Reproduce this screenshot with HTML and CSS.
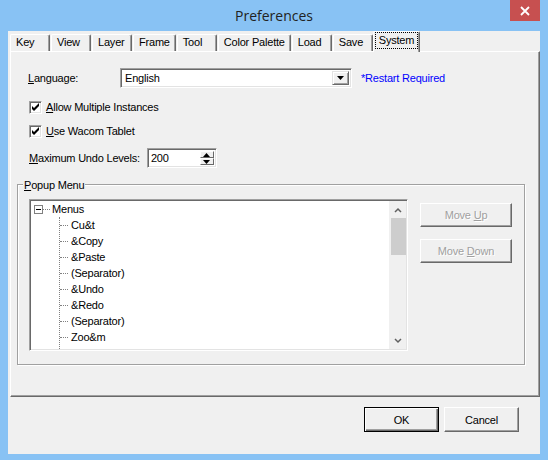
FILE: index.html
```html
<!DOCTYPE html>
<html lang="en">
<head>
    <meta charset="UTF-8">
    <meta name="viewport" content="width=device-width, initial-scale=1.0">
    <title>Preferences</title>
    <link rel="stylesheet" href="styles.css">
</head>
<body>

<div class="window">
    <div class="titlebar">
        <span class="title">Preferences</span>
        <span class="close">
            <svg width="10" height="10" viewBox="0 0 10 10"><path d="M1 1 L9 9 M9 1 L1 9" stroke="#fff" stroke-width="1.8" fill="none"/></svg>
        </span>
    </div>

    <div class="client">
        <div class="tabs">
            <div class="tab">Key</div>
            <div class="tab">View</div>
            <div class="tab">Layer</div>
            <div class="tab">Frame</div>
            <div class="tab">Tool</div>
            <div class="tab">Color Palette</div>
            <div class="tab">Load</div>
            <div class="tab">Save</div>
            <div class="tab active"><span class="focus">System</span></div>
        </div>

        <div class="page">
            <div class="lang-row">
                <span class="lang-label"><u>L</u>anguage:</span>
                <div class="combo">
                    <span class="combo-text">English</span>
                    <span class="combo-btn">
                        <svg width="7" height="4" viewBox="0 0 7 4"><path d="M0 0 H7 L3.5 4 Z" fill="#000"/></svg>
                    </span>
                </div>
                <span class="restart">*Restart Required</span>
            </div>

            <div class="check-row">
                <span class="check">
                    <svg width="13" height="13" viewBox="0 0 13 13"><path d="M3 5 L5 7 L10 2 L10 5 L5 10 L3 8 Z" fill="#000"/></svg>
                </span>
                <span><u>A</u>llow Multiple Instances</span>
            </div>
            <div class="check-row">
                <span class="check">
                    <svg width="13" height="13" viewBox="0 0 13 13"><path d="M3 5 L5 7 L10 2 L10 5 L5 10 L3 8 Z" fill="#000"/></svg>
                </span>
                <span><u>U</u>se Wacom Tablet</span>
            </div>

            <div class="undo-row">
                <span><u>M</u>aximum Undo Levels:</span>
                <div class="spin">
                    <span class="spin-text">200</span>
                    <span class="spin-btns">
                        <span class="spin-btn"><svg width="7" height="4" viewBox="0 0 7 4"><path d="M0 4 H7 L3.5 0 Z" fill="#000"/></svg></span>
                        <span class="spin-btn"><svg width="7" height="4" viewBox="0 0 7 4"><path d="M0 0 H7 L3.5 4 Z" fill="#000"/></svg></span>
                    </span>
                </div>
            </div>

            <div class="group">
                <span class="group-title"><u>P</u>opup Menu</span>
                <div class="group-body">
                    <div class="tree">
                        <div class="tree-items">
                            <div class="tree-root">
                                <svg class="minus" width="9" height="9" viewBox="0 0 9 9"><rect x="0.5" y="0.5" width="8" height="8" fill="#fff" stroke="#808080"/><path d="M2 4.5 H7" stroke="#000"/></svg>
                                <span class="hdots short"></span>
                                <span>Menus</span>
                            </div>
                            <div class="tree-children">
                                <div class="tree-item"><span class="hdots"></span>Cu&amp;t</div>
                                <div class="tree-item"><span class="hdots"></span>&amp;Copy</div>
                                <div class="tree-item"><span class="hdots"></span>&amp;Paste</div>
                                <div class="tree-item"><span class="hdots"></span>(Separator)</div>
                                <div class="tree-item"><span class="hdots"></span>&amp;Undo</div>
                                <div class="tree-item"><span class="hdots"></span>&amp;Redo</div>
                                <div class="tree-item"><span class="hdots"></span>(Separator)</div>
                                <div class="tree-item"><span class="hdots"></span>Zoo&amp;m</div>
                                <div class="tree-item"><span class="hdots"></span>U&amp;nzoom</div>
                            </div>
                        </div>
                        <div class="scrollbar">
                            <span class="arrow">
                                <svg width="8" height="6" viewBox="0 0 8 6"><path d="M1 5 L4 2 L7 5" stroke="#606060" stroke-width="1.5" fill="none"/></svg>
                            </span>
                            <span class="thumb"></span>
                            <span class="track"></span>
                            <span class="arrow">
                                <svg width="8" height="6" viewBox="0 0 8 6"><path d="M1 1 L4 4 L7 1" stroke="#606060" stroke-width="1.5" fill="none"/></svg>
                            </span>
                        </div>
                    </div>
                    <div class="side-buttons">
                        <button class="btn" disabled>Move <u>U</u>p</button>
                        <button class="btn" disabled>Move <u>D</u>own</button>
                    </div>
                </div>
            </div>
        </div>

        <div class="footer">
            <button class="btn default">OK</button>
            <button class="btn">Cancel</button>
        </div>
    </div>
</div>

</body>
</html>
```

FILE: styles.css
```css
body {
    margin: 0;
    font-family: "Liberation Sans", Arial, sans-serif;
    font-size: 11px;
    letter-spacing: -0.2px;
    color: #000;
}

.window {
    width: 548px;
    height: 460px;
    background-color: #88c2f4;
    overflow: hidden;
}

.titlebar {
    height: 31px;
    display: grid;
    grid-template-columns: 1fr auto 1fr;
    align-items: start;
}

.title {
    grid-column: 2;
    font-family: "Open Sans", sans-serif;
    font-size: 14px;
    letter-spacing: 0;
    line-height: 31px;
    color: #222;
}

.close {
    grid-column: 3;
    justify-self: end;
    width: 30px;
    height: 21px;
    margin-right: 8px;
    background-color: #c75050;
    display: flex;
    align-items: center;
    justify-content: center;
}

.client {
    margin: 0 8px;
    height: 423px;
    background-color: #f0f0f0;
}

/* tab strip */
.tabs {
    display: flex;
    align-items: flex-end;
    height: 20px;
    padding-left: 2px;
}

.tab {
    box-sizing: border-box;
    height: 17px;
    min-width: 40px;
    padding: 0 5px;
    margin-right: 1px;
    border-top: 1px solid #fff;
    border-left: 1px solid #fff;
    border-right: 1px solid #696969;
    border-radius: 2px 2px 0 0;
    box-shadow: inset -1px 0 #a0a0a0;
    line-height: 15px;
    white-space: nowrap;
}

.tab.active {
    position: relative;
    z-index: 1;
    height: 21px;
    min-width: 0;
    padding: 0 1px;
    margin: 0 0 -1px -1px;
    background-color: #f0f0f0;
}

.focus {
    display: block;
    box-sizing: border-box;
    height: 17px;
    padding: 0 3px;
    border: 1px dotted #000;
    line-height: 15px;
}

.page {
    box-sizing: border-box;
    width: 530px;
    height: 346px;
    margin-left: 2px;
    padding: 16px 0 0 6px;
    border: 1px solid;
    border-color: #fff #696969 #696969 #fff;
    box-shadow: inset -1px -1px #a0a0a0;
}

/* form rows */
.lang-row {
    display: flex;
    align-items: center;
    height: 20px;
    margin-left: 11px;
}

.lang-label {
    width: 92px;
}

.combo {
    box-sizing: border-box;
    display: flex;
    width: 232px;
    height: 20px;
    padding: 2px;
    background-color: #fff;
    border: 1px solid;
    border-color: #a0a0a0 #fff #fff #a0a0a0;
    box-shadow: inset 1px 1px #696969, inset -1px -1px #e3e3e3;
}

.combo-text {
    flex: 1;
    padding-left: 2px;
    line-height: 14px;
}

.combo-btn {
    box-sizing: border-box;
    width: 17px;
    display: flex;
    align-items: center;
    justify-content: center;
    background-color: #f0f0f0;
    border: 1px solid;
    border-color: #e3e3e3 #696969 #696969 #e3e3e3;
    box-shadow: inset 1px 1px #fff, inset -1px -1px #a0a0a0;
}

.restart {
    margin-left: 9px;
    color: #0000ff;
}

.check-row {
    display: flex;
    align-items: center;
    height: 16px;
    margin: 11px 0 0 12px;
}

.check-row + .check-row {
    margin-top: 8px;
}

.check {
    box-sizing: border-box;
    width: 13px;
    height: 13px;
    margin-right: 4px;
    background-color: #fff;
    border: 1px solid;
    border-color: #a0a0a0 #fff #fff #a0a0a0;
    box-shadow: inset 1px 1px #696969, inset -1px -1px #e3e3e3;
}

.check svg {
    display: block;
    margin: -1px;
}

.undo-row {
    display: flex;
    align-items: center;
    height: 20px;
    margin: 9px 0 0 12px;
}

.spin {
    box-sizing: border-box;
    display: flex;
    width: 70px;
    height: 20px;
    margin-left: 7px;
    padding: 2px;
    background-color: #fff;
    border: 1px solid;
    border-color: #a0a0a0 #fff #fff #a0a0a0;
    box-shadow: inset 1px 1px #696969, inset -1px -1px #e3e3e3;
}

.spin-text {
    flex: 1;
    padding-left: 1px;
    line-height: 14px;
}

.spin-btns {
    display: flex;
    flex-direction: column;
    width: 14px;
}

.spin-btn {
    box-sizing: border-box;
    flex: 1;
    display: flex;
    align-items: center;
    justify-content: center;
    background-color: #f0f0f0;
    border: 1px solid;
    border-color: #fff #696969 #696969 #fff;
}

/* popup menu group */
.group {
    box-sizing: border-box;
    width: 508px;
    height: 181px;
    margin-top: 16px;
    border: 1px solid #a0a0a0;
    box-shadow: inset 1px 1px #fff, 1px 1px #fff;
}

.group-title {
    display: block;
    width: fit-content;
    margin: -7px 0 0 5px;
    padding: 0 1px;
    line-height: 14px;
    background-color: #f0f0f0;
}

.group-body {
    display: flex;
    align-items: flex-start;
    margin-top: 7px;
    padding-left: 11px;
}

.tree {
    box-sizing: border-box;
    display: flex;
    width: 379px;
    height: 152px;
    padding: 1px;
    overflow: hidden;
    background-color: #fff;
    border: 1px solid;
    border-color: #a0a0a0 #fff #fff #a0a0a0;
    box-shadow: inset 1px 1px #696969, inset -1px -1px #e3e3e3;
}

.tree-items {
    flex: 1;
    overflow: hidden;
}

.tree-root {
    display: flex;
    align-items: center;
    height: 16px;
    padding-left: 3px;
}

.minus {
    display: block;
}

.hdots {
    width: 8px;
    margin-right: 3px;
    border-top: 1px dotted #808080;
}

.hdots.short {
    width: 7px;
    margin-right: 2px;
}

.tree-children {
    margin-left: 28px;
    border-left: 1px dotted #808080;
}

.tree-item {
    display: flex;
    align-items: center;
    height: 16px;
    white-space: nowrap;
}

.scrollbar {
    display: flex;
    flex-direction: column;
    width: 17px;
    background-color: #f0f0f0;
}

.arrow {
    height: 17px;
    display: flex;
    align-items: center;
    justify-content: center;
}

.thumb {
    height: 37px;
    margin-left: 2px;
    background-color: #cdcdcd;
}

.track {
    flex: 1;
}

.side-buttons {
    display: flex;
    flex-direction: column;
    gap: 12px;
    margin-left: 12px;
    padding-top: 4px;
}

.btn {
    box-sizing: border-box;
    width: 92px;
    height: 24px;
    padding: 0;
    font: inherit;
    letter-spacing: inherit;
    color: #000;
    background-color: #f0f0f0;
    border: 1px solid;
    border-color: #fff #696969 #696969 #fff;
    box-shadow: inset -1px -1px #a0a0a0;
}

.btn:disabled {
    color: #a0a0a0;
    text-shadow: 1px 1px 0 #fff;
}

.footer {
    display: flex;
    justify-content: flex-end;
    gap: 5px;
    padding: 10px 21px 0 0;
}

.footer .btn {
    width: 75px;
    height: 25px;
}

.btn.default {
    border: 1px solid #000;
    box-shadow: inset 1px 1px #fff, inset -1px -1px #696969, inset -2px -2px #a0a0a0;
}
```
